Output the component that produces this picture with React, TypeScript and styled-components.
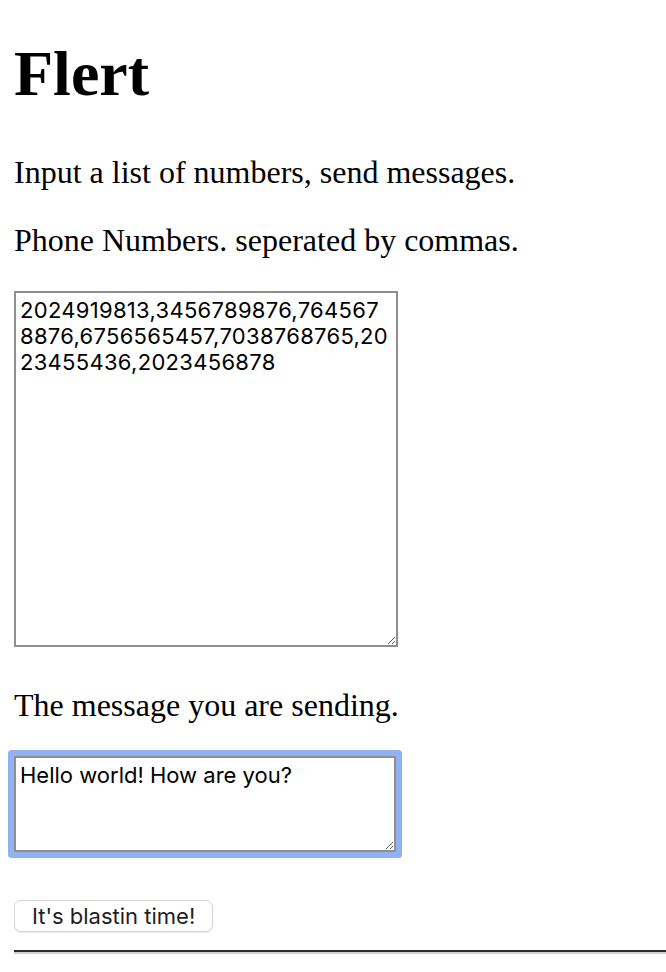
import React from "react";
import styled, { createGlobalStyle } from "styled-components";

const GlobalStyle = createGlobalStyle`
  html, body {
    margin: 0;
    padding: 0;
    background: #ffffff;
  }
  body {
    font-family: "Liberation Serif", "Times New Roman", serif;
    color: #000000;
    overflow: hidden;
  }
`;

const Page = styled.main`
  display: flex;
  flex-direction: column;
  align-items: flex-start;
  padding: 0 0 0 14px;
`;

const Title = styled.h1`
  margin: 38px 0 0;
  font-family: "Liberation Serif", "Times New Roman", serif;
  font-weight: 700;
  font-size: 64px;
  line-height: 72px;
`;

const Lead = styled.p<{ $space: number }>`
  margin: ${(p) => p.$space}px 0 0;
  font-family: "Liberation Serif", "Times New Roman", serif;
  font-size: 32px;
  line-height: 36px;
`;

const Field = styled.textarea<{
  $w: number;
  $h: number;
  $tracking?: number;
  $focused?: boolean;
}>`
  box-sizing: border-box;
  width: ${(p) => p.$w}px;
  height: ${(p) => p.$h}px;
  margin: 33px 0 0;
  padding: 4px 6px 4px 4px;
  border: 2px solid #8f8f8f;
  border-radius: ${(p) => (p.$focused ? "1px" : "0")};
  box-shadow: ${(p) => (p.$focused ? "0 0 0 6px #91b2f1" : "none")};
  outline: none;
  font-family: Inter, "Noto Sans", sans-serif;
  font-size: 22px;
  line-height: 26px;
  letter-spacing: ${(p) => p.$tracking ?? 0}px;
  color: #000000;
  caret-color: #2f6cf0;
  background: #ffffff;
  word-break: break-all;
`;

const BlastButton = styled.button`
  margin: 48px 0 0;
  height: 32px;
  padding: 0 17px;
  border: 1px solid #d6d6d6;
  border-radius: 7px;
  background: #ffffff;
  box-shadow: 0 1px 1px rgba(0, 0, 0, 0.08);
  font-family: Inter, "Noto Sans", sans-serif;
  font-size: 22px;
  color: #1e1e1e;
  cursor: pointer;
`;

const Rule = styled.hr`
  align-self: stretch;
  margin: 18px 0 0;
  height: 0;
  border: none;
  border-top: 2px solid #2b2b2b;
  border-bottom: 2px solid #d0d0d0;
`;

export default function App() {
  return (
    <>
      <GlobalStyle />
      <Page>
        <Title>Flert</Title>
        <Lead $space={44}>Input a list of numbers, send messages.</Lead>
        <Lead $space={32}>Phone Numbers. seperated by commas.</Lead>
        <Field
          $w={384}
          $h={356}
          $tracking={0.3}
          defaultValue="2024919813,3456789876,7645678876,6756565457,7038768765,2023455436,2023456878"
        />
        <Lead $space={40}>The message you are sending.</Lead>
        <Field $w={382} $h={96} $focused autoFocus defaultValue="Hello world! How are you?" />
        <BlastButton type="button">It's blastin time!</BlastButton>
        <Rule />
      </Page>
    </>
  );
}
